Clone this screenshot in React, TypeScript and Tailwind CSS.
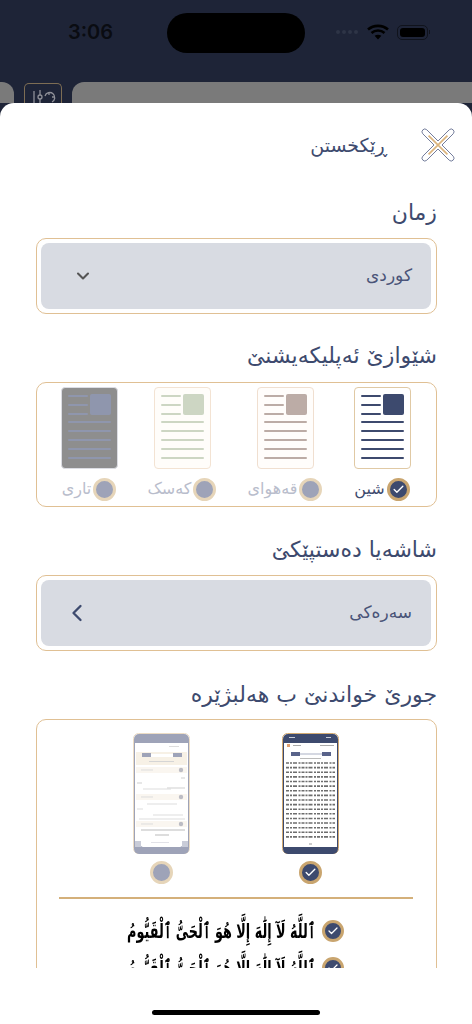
import { Check, ChevronDown, ChevronLeft } from 'lucide-react';

const arabic = "font-['DejaVu_Sans',sans-serif]";

const themes = [
  { name: 'شین', card: 'bg-white border-[#e0c9a4]', line: 'bg-[#3d4a6e]', label: 'text-[#3d4a6e]', selected: true, space: 'mr-[14px]' },
  { name: 'قەهوای', card: 'bg-[#fffdfb] border-[#f0dfd0]', line: 'bg-[#bcaca6]', label: 'text-[#b9bdcc]', selected: false, space: 'mr-[17px]' },
  { name: 'کەسک', card: 'bg-[#fffdfa] border-[#f3e3d3]', line: 'bg-[#cdd6c3]', label: 'text-[#b9bdcc]', selected: false, space: 'mr-[23px]' },
  { name: 'تاری', card: 'bg-[#8e8e8e] border-[#dcdde3]', line: 'bg-[#8f96ad]', label: 'text-[#b9bdcc]', selected: false, space: 'mr-[13px]' },
];

const StatusBar = () => (
  <div className="relative flex h-[82px] shrink-0 items-center justify-between pb-[18px] pl-[68px] pr-[42px]">
    <span className="font-['Inter',sans-serif] text-[20px] font-semibold text-[#0a0c12]">3:06</span>
    <div className="absolute left-[167px] top-[13px] h-[40px] w-[138px] rounded-full bg-black" />
    <div className="flex items-center">
      <div className="mr-[9px] flex gap-[2px]">
        {[0, 1, 2, 3].map((i) => (
          <span key={i} className="h-[4px] w-[4px] rounded-full bg-[#2e3446]" />
        ))}
      </div>
      <svg width="22" height="16" viewBox="0 0 22 16" className="mr-[8px]">
        <path d="M1 5.5C6.5 .6 15.5 .6 21 5.500" fill="none" stroke="#000" strokeWidth="2.600" />
        <path d="M4.500 9C8.200 5.700 13.800 5.700 17.500 9" fill="none" stroke="#000" strokeWidth="2.600" />
        <path d="M7.600 11.800 11 15.500l3.400-3.700c-2-1.500-4.800-1.500-6.800 0Z" fill="#000" />
      </svg>
      <div className="flex items-center">
        <div className="h-[15px] w-[31px] rounded-[5px] border border-[#10131c] p-[2px]">
          <div className="h-full w-full rounded-[3px] bg-black" />
        </div>
        <div className="ml-[1px] h-[4px] w-[1px] bg-[#10131c]" />
      </div>
    </div>
  </div>
);

const BackdropRow = () => (
  <div className="flex h-[21px] shrink-0 items-start">
    <div className="h-full w-[14px] rounded-tr-[12px] bg-[#7a7a7a]" />
    <div className="ml-[10px] mt-[1px] h-[20px] w-[38px] overflow-hidden rounded-t-[5px] border border-b-0 border-[#7d6d54]">
      <svg width="36" height="20" viewBox="0 0 36 20" fill="none" stroke="#8f9098" strokeWidth="1.300">
        <path d="M9 7v13M15 6v5M15 15v5" />
        <circle cx="15" cy="13" r="2" />
        <path d="M20 12a5 5 0 1 1 7 6M24 9v2M29 13h-2" />
      </svg>
    </div>
    <div className="ml-[10px] h-full flex-1 rounded-tl-[12px] bg-[#7a7a7a]" />
  </div>
);

const CloseIcon = () => (
  <svg width="34" height="34" viewBox="0 0 36 36" fill="none">
    <path
      d="M18 13.760 29.880 1.880A3 3 0 0 1 34.120 6.120L22.240 18 34.120 29.880A3 3 0 0 1 29.880 34.120L18 22.240 6.120 34.120A3 3 0 0 1 1.880 29.880L13.760 18 1.880 6.120A3 3 0 0 1 6.120 1.880Z"
      stroke="#6a7495"
      strokeWidth="1"
    />
    <path d="M8 8l20 20M28 8 8 28" stroke="#dcb57e" strokeWidth="1.800" />
  </svg>
);

const Radio = ({ selected, size = 'h-[23px] w-[23px]', icon = 13 }: { selected: boolean; size?: string; icon?: number }) => (
  <span
    className={`flex shrink-0 items-center justify-center rounded-full border-[3px] ${size} ${
      selected ? 'border-[#c9a56f] bg-[#3d4a6e]' : 'border-[#e6d5b9] bg-[#9ea3b8]'
    }`}
  >
    {selected && <Check size={icon} color="#fff" strokeWidth={2.500} />}
  </span>
);

const ThemeCard = ({ card, line }: { card: string; line: string }) => (
  <div className={`flex h-[82px] w-[57px] flex-col rounded-[4px] border px-[6px] pt-[6px] ${card}`}>
    <div className="flex justify-between" dir="ltr">
      <div className="flex w-[20px] flex-col gap-[7px] pt-[1px]">
        {[0, 1, 2].map((i) => (
          <span key={i} className={`h-[2px] rounded-full ${line}`} />
        ))}
      </div>
      <span className={`h-[21px] w-[21px] rounded-[2px] ${line}`} />
    </div>
    <div className="mt-[6px] flex flex-col gap-[7px]">
      {[0, 1, 2, 3, 4].map((i) => (
        <span key={i} className={`h-[2px] rounded-full ${line}`} />
      ))}
    </div>
  </div>
);

const Field = ({ label, children, className }: { label: string; children: React.ReactNode; className: string }) => (
  <div className={className}>
    <h2 className="pr-[35px] text-[22px] leading-[30px] text-[#3d4a6e]">{label}</h2>
    {children}
  </div>
);

const SelectBox = ({ value, icon, pad }: { value: string; icon: React.ReactNode; pad: string }) => (
  <div className="ml-[36px] mr-[35px] mt-[10px] h-[76px] rounded-[10px] border border-[#e0c094] py-[4px] pl-[4px] pr-[5px]">
    <div className={`flex h-full items-center justify-between rounded-[8px] bg-[#d8dbe2] pr-[19px] ${pad}`}>
      <span className="text-[17px] text-[#4a5478]">{value}</span>
      {icon}
    </div>
  </div>
);

const textRows = Array.from({ length: 17 }, (_, i) => 30 + i * 4.620);

const ReadingPhone = () => (
  <svg width="57" height="121" viewBox="0 0 57 121" className="blur-[0.5px]">
    <rect x="0.500" y="0.500" width="56" height="120" rx="5" fill="#fff" stroke="#d2aa72" />
    <path d="M1 6a5 5 0 0 1 5-5h45a5 5 0 0 1 5 5v4H1Z" fill="#3d4a6e" />
    <path d="M1 114h55v2a5 5 0 0 1-5 5H6a5 5 0 0 1-5-5Z" fill="#3d4a6e" />
    <path d="M1.500 10v104M55.500 10v104" stroke="#3d4a6e" strokeWidth="1" />
    <path d="M7 4.500h6M44 4.500h5" stroke="#c8cdd9" strokeWidth="1" />
    <rect x="5" y="11" width="3" height="3" fill="#e0a070" />
    <path d="M11 12.500h8M38 12.500h14" stroke="#aaa" strokeWidth="1" />
    <rect x="9" y="19" width="9" height="4" fill="#59638a" />
    <rect x="40" y="19" width="9" height="4" fill="#59638a" />
    <path d="M18 21h22" stroke="#d5d8e2" strokeWidth="2" />
    <path d="M18 25.500h21" stroke="#bbb" strokeWidth="1" />
    {textRows.map((y) => (
      <path key={y} d={`M4 ${y}H53`} stroke="#6d6d6d" strokeWidth="1.600" strokeDasharray="3 1 2 1 4 1.500 2 1" />
    ))}
    <path d="M27 111h3" stroke="#999" strokeWidth="1" />
  </svg>
);

const CardsPhone = () => (
  <svg width="57" height="121" viewBox="0 0 57 121" className="blur-[0.5px]">
    <rect x="0.500" y="0.500" width="56" height="120" rx="5" fill="#fff" stroke="#ecdcc4" />
    <path d="M1 6a5 5 0 0 1 5-5h45a5 5 0 0 1 5 5v4H1Z" fill="#9ea3b8" />
    <path d="M1 113h55v3a5 5 0 0 1-5 5H6a5 5 0 0 1-5-5Z" fill="#9ea3b8" />
    <path d="M1.500 10v103M55.500 10v103" stroke="#9ea3b8" strokeWidth="1" />
    <rect x="9" y="11" width="38" height="6" rx="1" fill="#fff" />
    <path d="M36 13.500h10" stroke="#ddd" strokeWidth="1" />
    <rect x="3" y="19" width="51" height="13" fill="#f7f1e6" />
    <rect x="9" y="20" width="9" height="4" fill="#9ea3b8" />
    <rect x="40" y="20" width="9" height="4" fill="#9ea3b8" />
    <rect x="18" y="21" width="22" height="3" fill="#fff" />
    <path d="M16 28.500h25" stroke="#d5d5d5" strokeWidth="1" />
    {[34, 61, 88].map((y) => (
      <g key={y}>
        <rect x="3" y={y} width="51" height="6" fill="#faf6f0" />
        <circle cx="48" cy={y + 3} r="2.200" fill="#bcbcc4" />
        <path d={`M8 ${y + 3}h12`} stroke="#ddd" strokeWidth="1" />
      </g>
    ))}
    <path d="M48 45h4M4 50h5M34 55h18" stroke="#d0d0d0" strokeWidth="1.200" />
    <path d="M10 56h28M14 71h30M4 76h6M20 82h30M6 86h46" stroke="#dedede" strokeWidth="1.200" />
    <path d="M8 97h44M22 102h14" stroke="#d2d2d2" strokeWidth="1.500" />
    <rect x="8" y="105" width="41" height="9" rx="2" fill="#fff" />
    <path d="M18 109.500h18" stroke="#e2e2e8" strokeWidth="1" />
    <rect x="2" y="108" width="6" height="6" fill="#c9ccd8" />
    <rect x="49" y="108" width="6" height="6" fill="#c9ccd8" />
  </svg>
);

const VerseRow = () => (
  <div className="flex h-[37px] items-center gap-[6px] pr-[92px] whitespace-nowrap">
    <Radio selected size="h-[22px] w-[22px]" icon={12} />
    <span className="origin-right scale-x-[0.64] text-[20px] font-bold text-black">
      ٱللَّهُ لَآ إِلَٰهَ إِلَّا هُوَ ٱلْحَىُّ ٱلْقَيُّومُ
    </span>
  </div>
);

export default function App() {
  return (
    <div className="flex h-[1024px] w-[472px] flex-col overflow-hidden bg-[#1e2437]">
      <StatusBar />
      <BackdropRow />
      <div dir="rtl" className={`flex flex-1 flex-col rounded-t-[14px] bg-white ${arabic}`}>
        <div className="h-[865px] overflow-hidden">
          <div className="flex h-[84px] items-center pr-[17px]">
            <CloseIcon />
            <span className="mr-[34px] text-[19px] text-[#3d4a6e]">ڕێکخستن</span>
          </div>

          <Field label="زمان" className="mt-[11px]">
            <SelectBox value="کوردی" pad="pl-[32px]" icon={<ChevronDown size={20} color="#555" strokeWidth={2.500} />} />
          </Field>

          <Field label="شێوازێ ئەپلیکەیشنێ" className="mt-[27px]">
            <div className="ml-[36px] mr-[35px] mt-[11px] flex h-[125px] rounded-[10px] border border-[#e0c094] pt-[4px]">
              {themes.map((t) => (
                <div key={t.name} className={`flex w-[80px] flex-col items-center ${t.space}`}>
                  <ThemeCard card={t.card} line={t.line} />
                  <div className="mt-[8px] flex items-center gap-[2px] whitespace-nowrap">
                    <Radio selected={t.selected} />
                    <span className={`text-[16px] ${t.label}`}>{t.name}</span>
                  </div>
                </div>
              ))}
            </div>
          </Field>

          <Field label="شاشەیا دەستپێکێ" className="mt-[28px]">
            <SelectBox value="سەرەکی" pad="pl-[22px]" icon={<ChevronLeft size={28} color="#3d4a6e" strokeWidth={2} />} />
          </Field>

          <Field label="جورێ خواندنێ ب هەلبژێرە" className="mt-[29px]">
            <div className="ml-[36px] mr-[35px] mt-[9px] h-[300px] rounded-t-[10px] border border-[#e0c094] pt-[13px]">
              <div className="flex justify-center gap-[92px] pr-[2px]">
                <div className="flex flex-col items-center gap-[7px]">
                  <ReadingPhone />
                  <Radio selected />
                </div>
                <div className="flex flex-col items-center gap-[7px]">
                  <CardsPhone />
                  <Radio selected={false} />
                </div>
              </div>
              <div className="ml-[22px] mr-[23px] mt-[13px] h-[2px] bg-[#d4b07a]" />
              <div className="mt-[13px]">
                <VerseRow />
                <VerseRow />
              </div>
            </div>
          </Field>
        </div>
        <div className="flex flex-1 items-end justify-center pb-[9px]">
          <div className="h-[5px] w-[168px] rounded-full bg-black" />
        </div>
      </div>
    </div>
  );
}
